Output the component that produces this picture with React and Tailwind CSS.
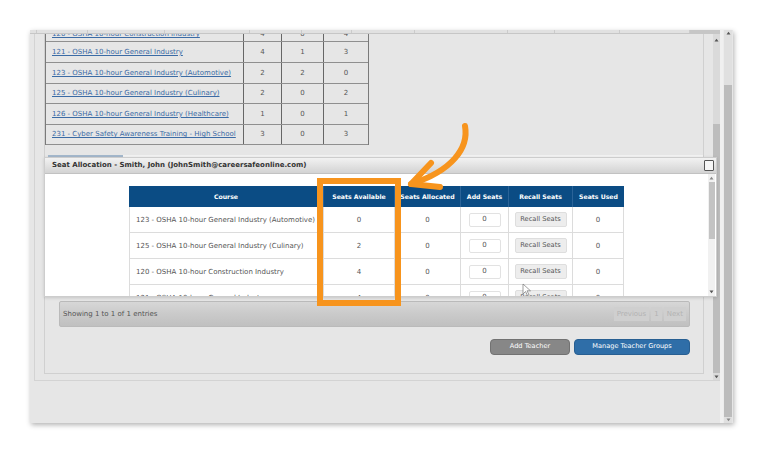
const firstRows = [
  ["121 - OSHA 10-hour General Industry", "4", "1", "3"],
  ["123 - OSHA 10-hour General Industry (Automotive)", "2", "2", "0"],
  ["125 - OSHA 10-hour General Industry (Culinary)", "2", "0", "2"],
  ["126 - OSHA 10-hour General Industry (Healthcare)", "1", "0", "1"],
  ["231 - Cyber Safety Awareness Training - High School", "3", "0", "3"],
];
const rowHeights = ["h-[21px]", "h-[21px]", "h-[20px]", "h-[21px]", "h-[20px]"];

const seatRows = [
  ["123 - OSHA 10-hour General Industry (Automotive)", "0"],
  ["125 - OSHA 10-hour General Industry (Culinary)", "2"],
  ["120 - OSHA 10-hour Construction Industry", "4"],
  ["121 - OSHA 10-hour General Industry", "4"],
];

const stripCells = [7, 51, 77, 85, 52, 50, 63, 93, 47, 65, 70];

function UpArrow({ color = "#555" }) {
  return (
    <svg width="5" height="4" viewBox="0 0 5 4">
      <path d="M0.5 3.5 L2.5 0.8 L4.5 3.5 Z" fill={color} />
    </svg>
  );
}
function DownArrow({ color = "#555" }) {
  return (
    <svg width="5" height="4" viewBox="0 0 5 4">
      <path d="M0.5 0.5 L2.5 3.2 L4.5 0.5 Z" fill={color} />
    </svg>
  );
}

function FirstTable() {
  return (
    <div className="w-[324px] flex flex-col border-l border-r border-[#7a7a7a] text-[7px]">
      <div className="h-[8px] flex border-b border-[#8f8f8f] overflow-hidden">
        <div className="w-[197px] pl-[6px] flex items-start">
          <span className="text-[#3b6ba5] underline leading-[7px] -translate-y-[3px] whitespace-nowrap">120 - OSHA 10-hour Construction Industry</span>
        </div>
        <div className="w-[38px] border-l border-[#666] flex justify-center"><span className="leading-[7px] -translate-y-[3px] text-[#555]">4</span></div>
        <div className="w-[42px] border-l border-[#666] flex justify-center"><span className="leading-[7px] -translate-y-[3px] text-[#555]">0</span></div>
        <div className="flex-1 border-l border-[#666] flex justify-center"><span className="leading-[7px] -translate-y-[3px] text-[#555]">4</span></div>
      </div>
      {firstRows.map((r, i) => (
        <div key={i} className={`${rowHeights[i]} flex border-b border-[#8f8f8f]`}>
          <div className="w-[197px] pl-[6px] flex items-center">
            <span className="text-[#3b6ba5] underline whitespace-nowrap">{r[0]}</span>
          </div>
          <div className="w-[38px] border-l border-[#666] flex items-center justify-center text-[#555]">{r[1]}</div>
          <div className="w-[42px] border-l border-[#666] flex items-center justify-center text-[#555]">{r[2]}</div>
          <div className="flex-1 border-l border-[#666] flex items-center justify-center text-[#555]">{r[3]}</div>
        </div>
      ))}
    </div>
  );
}

function Dialog() {
  const cols = ["w-[194px]", "w-[71px]", "w-[66px]", "w-[48px]", "w-[64px]", "w-[52px]"];
  const heads = ["Course", "Seats Available", "Seats Allocated", "Add Seats", "Recall Seats", "Seats Used"];
  return (
    <div className="absolute left-[44px] top-[157px] w-[673px] h-[140px] bg-white border border-[#cdcdcd] flex flex-col shadow-[0_1px_3px_rgba(0,0,0,0.15)]">
      <div className="h-[16px] shrink-0 bg-gradient-to-b from-[#f2f2f2] to-[#d3d3d3] border-b border-[#c2c2c2] flex items-center justify-between pl-[7px] pr-[2px]">
        <span className="text-[7px] font-bold text-[#333] whitespace-nowrap">Seat Allocation - Smith, John (JohnSmith@careersafeonline.com)</span>
        <span className="w-[10px] h-[11px] border-[1.5px] border-[#555] bg-[#f6f6f6] rounded-[1px]" />
      </div>
      <div className="flex-1 flex overflow-hidden">
        <div className="flex-1 pt-[12px] overflow-hidden">
          <div className="w-[495px] mx-auto flex flex-col">
            <div className="h-[21px] flex bg-[#0b4c84]">
              {heads.map((h, i) => (
                <div key={i} className={`${cols[i]} flex items-center justify-center text-white font-bold text-[6.2px] whitespace-nowrap ${i > 0 ? "border-l border-[#2a6398]" : ""}`}>{h}</div>
              ))}
            </div>
            {seatRows.map((r, i) => (
              <div key={i} className="h-[26px] shrink-0 flex border-b border-[#dcdcdc] text-[7px] text-[#555]">
                <div className={`${cols[0]} border-l border-[#dcdcdc] flex items-center pl-[6px] pt-[2px] whitespace-nowrap`}>{r[0]}</div>
                <div className={`${cols[1]} border-l border-[#dcdcdc] flex items-center justify-center pt-[2px]`}>{r[1]}</div>
                <div className={`${cols[2]} border-l border-[#dcdcdc] flex items-center justify-center pt-[2px]`}>0</div>
                <div className={`${cols[3]} border-l border-[#dcdcdc] flex items-center justify-center`}>
                  <div className="w-[32px] h-[14px] border border-[#e2e2e2] rounded-[2px] bg-white flex items-center justify-center">0</div>
                </div>
                <div className={`${cols[4]} border-l border-[#dcdcdc] flex items-center justify-center`}>
                  <div className="w-[52px] h-[15px] bg-[#ededed] border border-[#dedede] rounded-[2px] flex items-center justify-center text-[6.7px] whitespace-nowrap">Recall Seats</div>
                </div>
                <div className={`${cols[5]} border-l border-r border-[#dcdcdc] flex items-center justify-center pt-[2px]`}>0</div>
              </div>
            ))}
          </div>
        </div>
        <div className="w-[7px] bg-[#f1f1f1] flex flex-col items-center">
          <div className="h-[8px] flex items-center"><UpArrow color="#888" /></div>
          <div className="w-[6px] h-[57px] bg-[#c3c3c3]" />
          <div className="flex-1" />
          <div className="h-[8px] flex items-center"><DownArrow color="#555" /></div>
        </div>
        <div className="w-[1px]" />
      </div>
    </div>
  );
}

export default function App() {
  return (
    <div className="relative w-[760px] h-[454px] bg-white overflow-hidden font-['DejaVu_Sans',Verdana,sans-serif]">
      <div className="ml-[30px] mt-[30px] w-[703px] h-[393px] bg-[#e6e6e6] flex shadow-[1px_2px_5px_rgba(0,0,0,0.3)]">
        <div className="w-[690px] flex flex-col">
          <div className="h-[4px] flex bg-[#e1e1e1] border-b border-[#c6c6c6]">
            {stripCells.map((w, i) => (
              <div key={i} style={{ width: w }} className="border-r border-[#cbcbcb]" />
            ))}
            <div className="flex-1 bg-[#c6c6c6]" />
          </div>
          <div className="ml-[4px] w-[686px] h-[347px] border-l border-b border-[#d3d3d3] flex">
            <div className="flex-1 overflow-hidden pl-[9px]">
              <div className="w-[660px] h-[340px] border-l border-r border-b border-[#d0d0d0] flex flex-col">
                <FirstTable />
                <div className="mt-[10px] h-[2px] flex">
                  <div className="w-[3px]" />
                  <div className="w-[75px] bg-[#a4b8cc]" />
                  <div className="flex-1 bg-[#f3f3f3]" />
                </div>
                <div className="h-[144px]" />
                <div className="ml-[14px] w-[631px] h-[26px] rounded-[2px] border border-[#bababa] bg-gradient-to-b from-[#d7d7d7] via-[#cacaca] to-[#c0c0c0] flex items-center justify-between pl-[3px] pr-[3px]">
                  <span className="text-[7px] text-[#555] whitespace-nowrap">Showing 1 to 1 of 1 entries</span>
                  <div className="flex gap-[2px] text-[7px] text-[#b3b3b3]">
                    <div className="h-[14px] px-[3px] bg-[#cfcfcf] flex items-center">Previous</div>
                    <div className="h-[14px] px-[3px] bg-[#cfcfcf] flex items-center">1</div>
                    <div className="h-[14px] px-[3px] bg-[#cfcfcf] flex items-center">Next</div>
                  </div>
                </div>
                <div className="mt-[12px] flex justify-end gap-[4px] pr-[13px]">
                  <div className="w-[80px] h-[16px] rounded-[4px] bg-[#878787] border border-[#727272] flex items-center justify-center text-white text-[6.6px]">Add Teacher</div>
                  <div className="w-[116px] h-[16px] rounded-[4px] bg-[#2f6ea8] border border-[#285f92] flex items-center justify-center text-white text-[6.6px] whitespace-nowrap">Manage Teacher Groups</div>
                </div>
              </div>
            </div>
            <div className="w-[7px] bg-[#dadada] flex flex-col items-center">
              <div className="h-[8px] flex items-end"><UpArrow /></div>
              <div className="h-[82px]" />
              <div className="w-[7px] flex-1 bg-[#bdbdbd]" />
              <div className="h-[7px] flex items-center"><DownArrow /></div>
            </div>
          </div>
        </div>
        <div className="w-[3px] bg-[#f0f0f0]" />
        <div className="w-[9px] bg-[#e0e0e0] flex flex-col items-center border-l border-[#ececec]">
          <div className="h-[6px] flex items-center"><UpArrow /></div>
          <div className="h-[49px]" />
          <div className="w-[8px] flex-1 bg-[#bcbcbc]" />
          <div className="h-[6px] flex items-center"><DownArrow color="#888" /></div>
        </div>
        <div className="w-[1px]" />
      </div>

      <Dialog />

      <div className="absolute left-[317px] top-[178px] w-[84px] h-[128px] border-[6px] border-[#f7941d]" />

      <svg className="absolute left-0 top-0 pointer-events-none" width="760" height="454" viewBox="0 0 760 454">
        <path d="M465 126 C469 148 452 171 411 184" fill="none" stroke="#f7941d" strokeWidth="6" strokeLinecap="round" />
        <path d="M431 163 L411 184 L440 187" fill="none" stroke="#f7941d" strokeWidth="6" strokeLinecap="round" strokeLinejoin="round" />
        <path d="M523 284 L523 294 L525.5 291.5 L527.5 295.5 L529 294.8 L527 290.8 L530.5 290.8 Z" fill="#fff" stroke="#777" strokeWidth="0.7" />
      </svg>
    </div>
  );
}
